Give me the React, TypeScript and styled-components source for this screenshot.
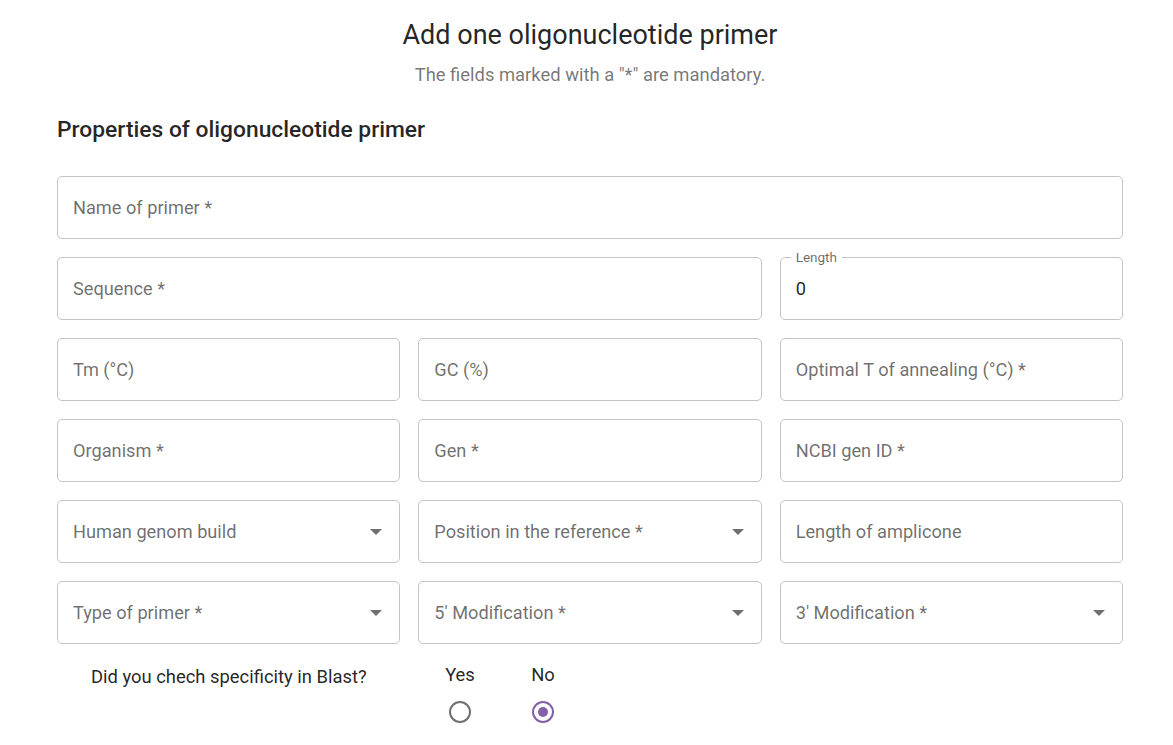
import React from "react";
import styled, { createGlobalStyle } from "styled-components";

const Global = createGlobalStyle`
  html, body { margin: 0; padding: 0; background: #fff; }
  body { font-family: Roboto, "Noto Sans", Arial, sans-serif; color: rgba(0,0,0,0.87); }
`;

const Page = styled.div`
  padding: 17px 50px 0 57px;
`;

const Title = styled.h1`
  margin: 0;
  text-align: center;
  font-weight: 400;
  font-size: 27px;
  line-height: 36px;
  color: rgba(0,0,0,0.87);
`;

const Subtitle = styled.p`
  margin: 9px 0 0;
  text-align: center;
  font-size: 18.4px;
  line-height: 26px;
  color: rgba(0,0,0,0.55);
`;

const Heading = styled.h2`
  margin: 27px 0 0;
  font-size: 22.8px;
  font-weight: 500;
  line-height: 30px;
  color: rgba(0,0,0,0.87);
`;

const Grid = styled.div`
  margin-top: 31px;
  display: grid;
  grid-template-columns: repeat(6, 1fr);
  column-gap: 18px;
  row-gap: 18px;
`;

const Field = styled.div<{ $span: number }>`
  grid-column: span ${(p) => p.$span};
  position: relative;
  height: 63px;
  box-sizing: border-box;
  border: 1px solid #c4c4c4;
  border-radius: 5px;
  display: flex;
  align-items: center;
  padding: 0 16px 0 15px;
`;

const Placeholder = styled.span`
  flex: 1;
  font-size: 18.2px;
  color: rgba(0,0,0,0.58);
  white-space: nowrap;
`;

const Value = styled.span`
  flex: 1;
  font-size: 18.2px;
  color: rgba(0,0,0,0.87);
`;

const Legend = styled.span`
  position: absolute;
  top: -9px;
  left: 10px;
  padding: 0 5px;
  background: #fff;
  font-size: 13.5px;
  line-height: 16px;
  color: rgba(0,0,0,0.6);
`;

const Arrow = styled.span`
  width: 0;
  height: 0;
  border-left: 6px solid transparent;
  border-right: 6px solid transparent;
  border-top: 6px solid #6f6f6f;
  margin-right: 1px;
`;

const QuestionRow = styled.div`
  display: flex;
  align-items: flex-start;
  margin-top: 19px;
  padding-left: 34px;
`;

const Question = styled.span`
  width: 348px;
  font-size: 18.4px;
  line-height: 24px;
  margin-top: 2px;
  color: rgba(0,0,0,0.87);
`;

const Option = styled.label`
  width: 42px;
  display: flex;
  flex-direction: column;
  align-items: center;
  margin-right: 41px;
`;

const OptionText = styled.span`
  font-size: 18.4px;
  line-height: 24px;
  color: rgba(0,0,0,0.87);
`;

const RadioCircle = styled.span<{ $checked?: boolean }>`
  margin-top: 14px;
  width: 22px;
  height: 22px;
  box-sizing: border-box;
  border-radius: 50%;
  border: 2px solid ${(p) => (p.$checked ? "#8360a8" : "#707070")};
  display: flex;
  align-items: center;
  justify-content: center;
  &::after {
    content: "";
    width: 10px;
    height: 10px;
    border-radius: 50%;
    background: ${(p) => (p.$checked ? "#8360a8" : "transparent")};
  }
`;

type F = { label: string; span: number; select?: boolean; value?: string; legend?: string };

const fields: F[] = [
  { label: "Name of primer *", span: 6 },
  { label: "Sequence *", span: 4 },
  { label: "", span: 2, legend: "Length", value: "0" },
  { label: "Tm (°C)", span: 2 },
  { label: "GC (%)", span: 2 },
  { label: "Optimal T of annealing (°C) *", span: 2 },
  { label: "Organism *", span: 2 },
  { label: "Gen *", span: 2 },
  { label: "NCBI gen ID *", span: 2 },
  { label: "Human genom build", span: 2, select: true },
  { label: "Position in the reference *", span: 2, select: true },
  { label: "Length of amplicone", span: 2 },
  { label: "Type of primer *", span: 2, select: true },
  { label: "5' Modification *", span: 2, select: true },
  { label: "3' Modification *", span: 2, select: true },
];

export default function App() {
  return (
    <>
      <Global />
      <Page>
        <Title>Add one oligonucleotide primer</Title>
        <Subtitle>The fields marked with a "*" are mandatory.</Subtitle>
        <Heading>Properties of oligonucleotide primer</Heading>
        <Grid>
          {fields.map((f, i) => (
            <Field key={i} $span={f.span}>
              {f.legend && <Legend>{f.legend}</Legend>}
              {f.value !== undefined ? <Value>{f.value}</Value> : <Placeholder>{f.label}</Placeholder>}
              {f.select && <Arrow />}
            </Field>
          ))}
        </Grid>
        <QuestionRow>
          <Question>Did you chech specificity in Blast?</Question>
          <Option>
            <OptionText>Yes</OptionText>
            <RadioCircle />
          </Option>
          <Option>
            <OptionText>No</OptionText>
            <RadioCircle $checked />
          </Option>
        </QuestionRow>
      </Page>
    </>
  );
}
